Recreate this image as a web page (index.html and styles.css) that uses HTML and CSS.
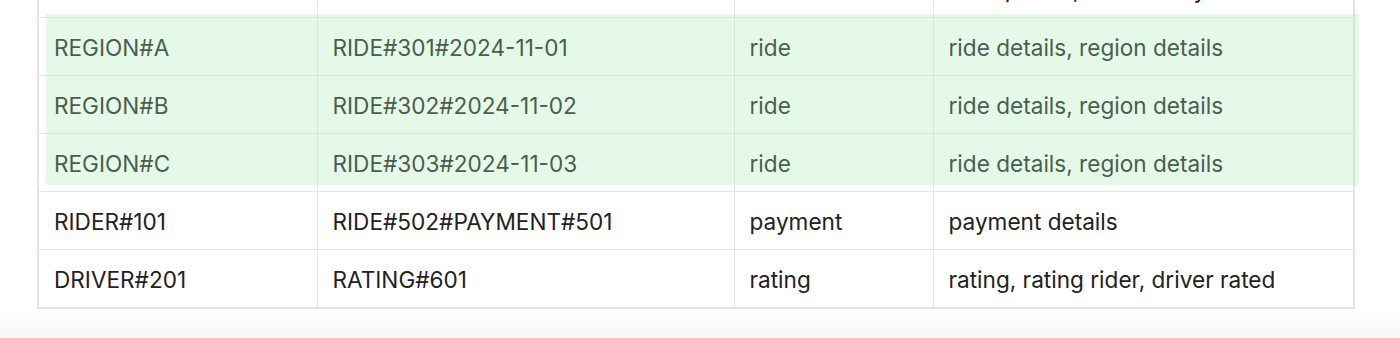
FILE: index.html
```html
<!DOCTYPE html>
<html>
<head>
<meta charset="utf-8">
<link rel="stylesheet" href="styles.css">
</head>
<body>
<div class="wrap">
  <table class="grid">
    <colgroup>
      <col class="c1"><col class="c2"><col class="c3"><col class="c4">
    </colgroup>
    <tbody>
      <tr><td>RIDER#101</td><td>PROFILE</td><td>rider</td><td>rider profile, ride history</td></tr>
      <tr><td>REGION#A</td><td>RIDE#301#2024-11-01</td><td>ride</td><td>ride details, region details</td></tr>
      <tr><td>REGION#B</td><td>RIDE#302#2024-11-02</td><td>ride</td><td>ride details, region details</td></tr>
      <tr><td>REGION#C</td><td>RIDE#303#2024-11-03</td><td>ride</td><td>ride details, region details</td></tr>
      <tr><td>RIDER#101</td><td>RIDE#502#PAYMENT#501</td><td>payment</td><td>payment details</td></tr>
      <tr><td>DRIVER#201</td><td>RATING#601</td><td>rating</td><td>rating, rating rider, driver rated</td></tr>
    </tbody>
  </table>
  <div class="highlight"></div>
</div>
<div class="foot"></div>
</body>
</html>
```
FILE: styles.css
```css
html, body {
  margin: 0;
  padding: 0;
  background: #ffffff;
}
body {
  font-family: Inter, "Noto Sans", sans-serif;
  color: #222222;
  overflow: hidden;
  height: 338px;
}
.wrap {
  position: relative;
  margin-top: -42px;
  padding-left: 37px;
  width: 1316px;
}
.grid {
  width: 1316px;
  table-layout: fixed;
  border-collapse: collapse;
  border: 2px solid #e4e4e4;
}
.c1 { width: 279px; }
.c2 { width: 417px; }
.c3 { width: 199px; }
.c4 { width: 421px; }
.grid td {
  height: 55px;
  padding: 2px 15px 0;
  border: 1px solid #e6e6e6;
  font-size: 22.6px;
  line-height: 26px;
  white-space: nowrap;
  vertical-align: middle;
}
.highlight {
  position: absolute;
  left: 46px;
  top: 56px;
  width: 1313px;
  height: 171px;
  background: rgba(165, 236, 175, 0.3);
  pointer-events: none;
}
.foot {
  height: 30px;
  margin-top: 1px;
  background: linear-gradient(#ffffff, #f6f6f6);
}
```
